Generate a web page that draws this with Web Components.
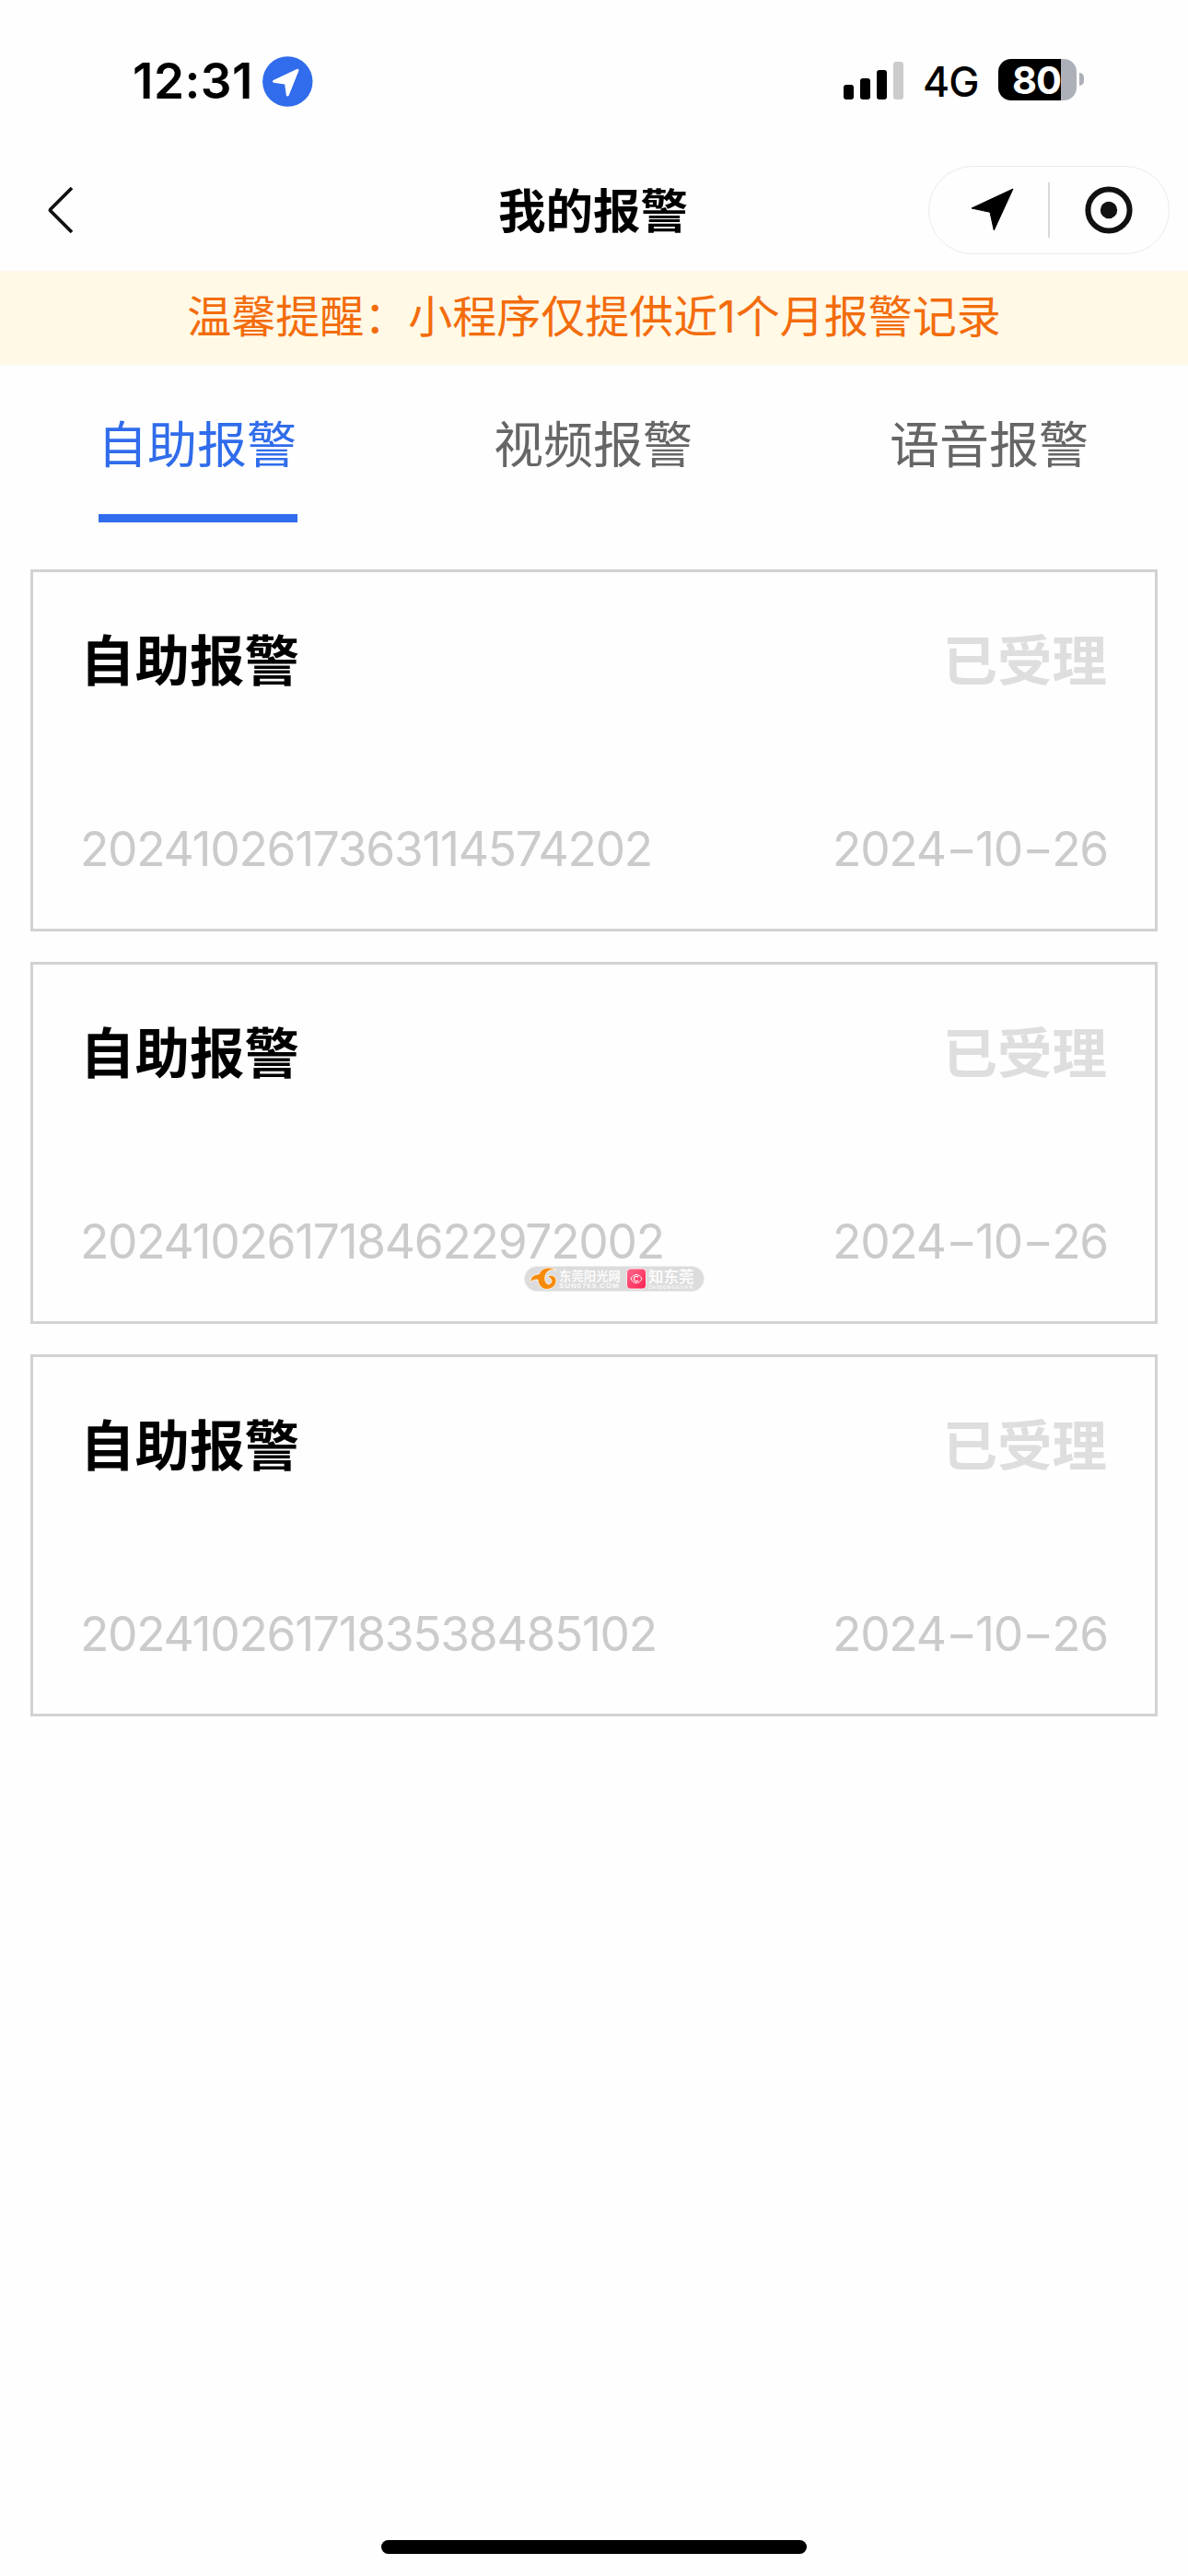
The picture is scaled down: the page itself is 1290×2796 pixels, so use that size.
<!DOCTYPE html>
<html lang="zh-CN">
<head>
<meta charset="utf-8">
<title>我的报警</title>
<style>
    body {
        margin: 0;
        background: #fefefe;
    }
</style>
</head>
<body>
<alarm-page></alarm-page>

<script>
// ---------- status bar ----------
var template_statusbar = document.createElement("template");
template_statusbar.innerHTML = `
<style>
    :host {
        display: flex;
        justify-content: space-between;
        align-items: center;
        box-sizing: border-box;
        height: 162px;
        padding: 0 113px 0 144px;
        font-family: Inter, "Liberation Sans", sans-serif;
        color: #000;
    }
    .left, .right {
        display: flex;
        align-items: center;
        height: 56px;
        margin-top: 14px;
    }
    .left { gap: 9px; }
    .time {
        font-size: 53px;
        font-weight: 600;
        line-height: 56px;
        width: 132px;
        letter-spacing: 0.5px;
        white-space: nowrap;
    }
    .net {
        font-size: 44.5px;
        font-weight: 500;
        line-height: 56px;
        width: 60px;
        margin: 1px 22px 0 20px;
        letter-spacing: -1px;
    }
    .battery {
        display: flex;
        align-items: center;
        gap: 3px;
        margin-top: -4px;
    }
    .cell {
        box-sizing: border-box;
        width: 85px;
        height: 45px;
        border-radius: 14px;
        padding-left: 15px;
        background: linear-gradient(90deg, #000 68px, #adb0b8 68px);
        color: #fff;
        font-size: 41.5px;
        font-weight: 700;
        line-height: 47px;
        letter-spacing: -1px;
    }
    .tip {
        width: 5px;
        height: 14px;
        border-radius: 0 7px 7px 0;
        background: #adb0b8;
    }
    svg { display: block; }
</style>
<div class="left">
    <span class="time"></span>
    <svg width="55" height="55" viewBox="0 0 55 55">
        <circle cx="27.3" cy="27.5" r="27.2" fill="#306ceb"/>
        <path d="M12.5 27.3 L38 15.3 L27.3 42 L25.5 29.2 Z" fill="#fff" stroke="#fff" stroke-width="3" stroke-linejoin="round"/>
    </svg>
</div>
<div class="right">
    <svg width="66" height="42" viewBox="0 0 66 42">
        <rect x="0" y="25" width="11" height="16" rx="3"/>
        <rect x="18" y="18" width="11" height="23" rx="3"/>
        <rect x="36" y="9" width="11" height="32" rx="3"/>
        <rect x="54" y="0" width="11" height="41" rx="3" fill="#ccc"/>
    </svg>
    <span class="net"></span>
    <div class="battery"><div class="cell"></div><div class="tip"></div></div>
</div>
`;

class StatusBar extends HTMLElement {
    constructor(){
        super();
        this.attachShadow({mode:"open"})
    }
    connectedCallback(){
        this.shadowRoot.appendChild(template_statusbar.content.cloneNode(true));
        this.shadowRoot.querySelector(".time").textContent = this.getAttribute("time");
        this.shadowRoot.querySelector(".net").textContent = this.getAttribute("net");
        this.shadowRoot.querySelector(".cell").textContent = this.getAttribute("battery");
    }
}
customElements.define("status-bar", StatusBar)

// ---------- nav bar with the mini program capsule ----------
var template_navbar = document.createElement("template");
template_navbar.innerHTML = `
<style>
    :host {
        display: grid;
        grid-template-columns: 1fr auto 1fr;
        align-items: center;
        box-sizing: border-box;
        height: 132px;
        padding: 0 20px 0 49px;
    }
    .title {
        font-size: 51.5px;
        font-weight: 700;
        line-height: 60px;
        color: #000;
        margin-left: -31px;
        margin-top: 2px;
    }
    .capsule {
        justify-self: end;
        display: flex;
        align-items: center;
        box-sizing: border-box;
        width: 262px;
        height: 96px;
        padding-left: 45px;
        border: 1px solid #ebebeb;
        border-radius: 48px;
    }
    .line {
        width: 2px;
        height: 60px;
        background: #d8d8d8;
        margin: 0 38px 0 36px;
    }
    svg { display: block; }
</style>
<svg width="34" height="54" viewBox="0 0 34 54">
    <path d="M29 3 L6 26 Q5 27 6 28 L29 51" fill="none" stroke="#111" stroke-width="3.8"/>
</svg>
<div class="title"><slot></slot></div>
<div class="capsule">
    <svg width="48" height="48" viewBox="0 0 48 48">
        <path d="M46 1 L1 22 L21 26.3 L25.3 46 Z" stroke="#000" stroke-width="1" stroke-linejoin="round"/>
    </svg>
    <div class="line"></div>
    <svg width="52" height="52" viewBox="0 0 52 52">
        <circle cx="26" cy="26" r="22.6" fill="none" stroke="#111" stroke-width="6"/>
        <circle cx="26" cy="26" r="9.2" fill="#111"/>
    </svg>
</div>
`;

class NavBar extends HTMLElement {
    constructor(){
        super();
        this.attachShadow({mode:"open"})
    }
    connectedCallback(){
        this.shadowRoot.appendChild(template_navbar.content.cloneNode(true));
    }
}
customElements.define("nav-bar", NavBar)

// ---------- notice strip ----------
var template_notice = document.createElement("template");
template_notice.innerHTML = `
<style>
    :host {
        display: block;
        height: 102px;
        line-height: 99px;
        background: #fff9e6;
        color: #f36c0c;
        font-size: 48px;
        text-align: center;
    }
</style>
<slot></slot>
`;

class NoticeStrip extends HTMLElement {
    constructor(){
        super();
        this.attachShadow({mode:"open"})
    }
    connectedCallback(){
        this.shadowRoot.appendChild(template_notice.content.cloneNode(true));
    }
}
customElements.define("notice-strip", NoticeStrip)

// ---------- tabs ----------
var template_tab = document.createElement("template");
template_tab.innerHTML = `
<style>
    :host {
        flex: 1;
        display: flex;
        justify-content: center;
        color: #666;
        cursor: pointer;
    }
    .label {
        box-sizing: border-box;
        width: 216px;
        height: 171px;
        padding-top: 50px;
        border-bottom: 9px solid transparent;
        font-size: 54px;
        line-height: 76px;
        text-indent: -1px;
        white-space: nowrap;
    }
    :host([active]) .label {
        color: #306ceb;
        border-bottom-color: #306ceb;
    }
</style>
<div class="label"><slot></slot></div>
`;

class AlarmTab extends HTMLElement {
    constructor(){
        super();
        this.attachShadow({mode:"open"})
    }
    connectedCallback(){
        this.shadowRoot.appendChild(template_tab.content.cloneNode(true));
        this.onclick = () => {
            this.parentElement.querySelectorAll("alarm-tab").forEach(t => t.removeAttribute("active"));
            this.setAttribute("active", "");
        }
    }
}
customElements.define("alarm-tab", AlarmTab)

// ---------- record card ----------
var template_card = document.createElement("template");
template_card.innerHTML = `
<style>
    :host {
        display: flex;
        flex-direction: column;
        justify-content: space-between;
        box-sizing: border-box;
        height: 393px;
        padding: 56px 51px 54px;
        border: 3px solid #d2d2d2;
    }
    .row {
        display: flex;
        justify-content: space-between;
        align-items: center;
    }
    .top {
        font-size: 59.5px;
        font-weight: 700;
        line-height: 80px;
        color: #000;
    }
    .status {
        color: #dedede;
        margin-right: 1px;
    }
    .bottom {
        font-family: Inter, "Noto Sans CJK SC", sans-serif;
        font-size: 51.5px;
        font-weight: 400;
        line-height: 66px;
        letter-spacing: -1.3px;
        color: #cbcbcb;
    }
    .dash {
        display: inline-block;
        transform: scaleX(1.45);
        margin: 0 5px;
    }
</style>
<div class="row top">
    <span><slot></slot></span>
    <span class="status"></span>
</div>
<div class="row bottom">
    <span class="code"></span>
    <span class="date"></span>
</div>
`;

class RecordCard extends HTMLElement {
    constructor(){
        super();
        this.attachShadow({mode:"open"})
    }
    connectedCallback(){
        this.shadowRoot.appendChild(template_card.content.cloneNode(true));
        this.shadowRoot.querySelector(".status").textContent = this.getAttribute("status");
        this.shadowRoot.querySelector(".code").textContent = this.getAttribute("code");
        //the dashes are drawn wider than the font has them
        this.shadowRoot.querySelector(".date").innerHTML =
            this.getAttribute("date").split("-").join('<span class="dash">-</span>');
    }
}
customElements.define("record-card", RecordCard)

// ---------- site badge, floats over the list ----------
var template_badge = document.createElement("template");
template_badge.innerHTML = `
<style>
    :host {
        display: flex;
        align-items: center;
        box-sizing: border-box;
        width: 196px;
        height: 28px;
        padding-left: 5px;
        border: 1px solid #ececec;
        border-radius: 14px;
        background: #dcdcdc;
        color: #fafafa;
    }
    svg { display: block; flex: none; }
    .name {
        display: flex;
        flex-direction: column;
        white-space: nowrap;
        font-size: 13.4px;
        line-height: 14px;
        font-weight: 700;
        padding-top: 2px;
    }
    .name small {
        font-family: "Liberation Sans", sans-serif;
        font-size: 8px;
        line-height: 8px;
        letter-spacing: 0.9px;
    }
    .sun { width: 67px; margin: 0 6px 0 2px; }
    .zhi { width: 52px; margin-left: 2px; font-size: 16.5px; line-height: 15px; }
    .zhi small { font-size: 5px; line-height: 6px; letter-spacing: 1px; }
</style>
<svg width="30" height="26" viewBox="0 0 30 26">
    <path d="M29 4 C25 0 14 -1 10 8 C5 8 1 11 0.5 17 C3 14 6 14 9 14 C9 20 14 24.5 19 24.5 C25 24 29 20 29 15 C29 10 24 8 19 10 C24 12 26 17 21 19 C16 19 15 9 20 5 C22 3 26 3 29 4 Z" fill="#f78a09" stroke="#fff" stroke-width="0.8"/>
</svg>
<div class="name sun"><span>东莞阳光网</span><small>SUN0769.COM</small></div>
<svg width="22" height="24" viewBox="0 0 22 24">
    <defs>
        <linearGradient id="pink" x1="0" y1="0" x2="1" y2="1">
            <stop offset="0" stop-color="#ff6a8c"/>
            <stop offset="1" stop-color="#fb1f50"/>
        </linearGradient>
    </defs>
    <rect x="0.5" y="1" width="21" height="22" rx="4" fill="url(#pink)" stroke="#fff" stroke-width="0.8"/>
    <path d="M5 12 C8 6 14 6 17 12 C14 18 8 18 5 12 Z" fill="none" stroke="#fff" stroke-width="1"/>
    <path d="M13 10.4 A2.6 2.6 0 1 0 13 13.6" fill="none" stroke="#fff" stroke-width="1.1"/>
</svg>
<div class="name zhi"><span>知东莞</span><small>ZHIDONGGUAN</small></div>
`;

class SiteBadge extends HTMLElement {
    constructor(){
        super();
        this.attachShadow({mode:"open"})
    }
    connectedCallback(){
        this.shadowRoot.appendChild(template_badge.content.cloneNode(true));
    }
}
customElements.define("site-badge", SiteBadge)

// ---------- the page ----------
var template_page = document.createElement("template");
template_page.innerHTML = `
<style>
    :host {
        position: relative;
        display: flex;
        flex-direction: column;
        box-sizing: border-box;
        width: 1290px;
        height: 2796px;
        overflow: hidden;
        background: #fefefe;
        font-family: Inter, "Noto Sans CJK SC", sans-serif;
    }
    .tabs { display: flex; }
    .list {
        flex: 1;
        display: flex;
        flex-direction: column;
        gap: 33px;
        padding: 51px 33px 0;
    }
    site-badge {
        position: absolute;
        left: 569px;
        top: 1374px;
    }
    .home {
        align-self: center;
        width: 462px;
        height: 15px;
        border-radius: 8px;
        background: #000;
        margin-bottom: 24px;
    }
</style>
<status-bar time="12:31" net="4G" battery="80"></status-bar>
<nav-bar>我的报警</nav-bar>
<notice-strip>温馨提醒：小程序仅提供近1个月报警记录</notice-strip>
<div class="tabs">
    <alarm-tab active>自助报警</alarm-tab>
    <alarm-tab>视频报警</alarm-tab>
    <alarm-tab>语音报警</alarm-tab>
</div>
<div class="list">
    <record-card code="2024102617363114574202" date="2024-10-26" status="已受理">自助报警</record-card>
    <record-card code="2024102617184622972002" date="2024-10-26" status="已受理">自助报警</record-card>
    <record-card code="2024102617183538485102" date="2024-10-26" status="已受理">自助报警</record-card>
</div>
<div class="home"></div>
<site-badge></site-badge>
`;

class AlarmPage extends HTMLElement {
    constructor(){
        super();
        this.attachShadow({mode:"open"})
    }
    connectedCallback(){
        this.shadowRoot.appendChild(template_page.content.cloneNode(true));
    }
}
customElements.define("alarm-page", AlarmPage)
</script>
</body>
</html>
